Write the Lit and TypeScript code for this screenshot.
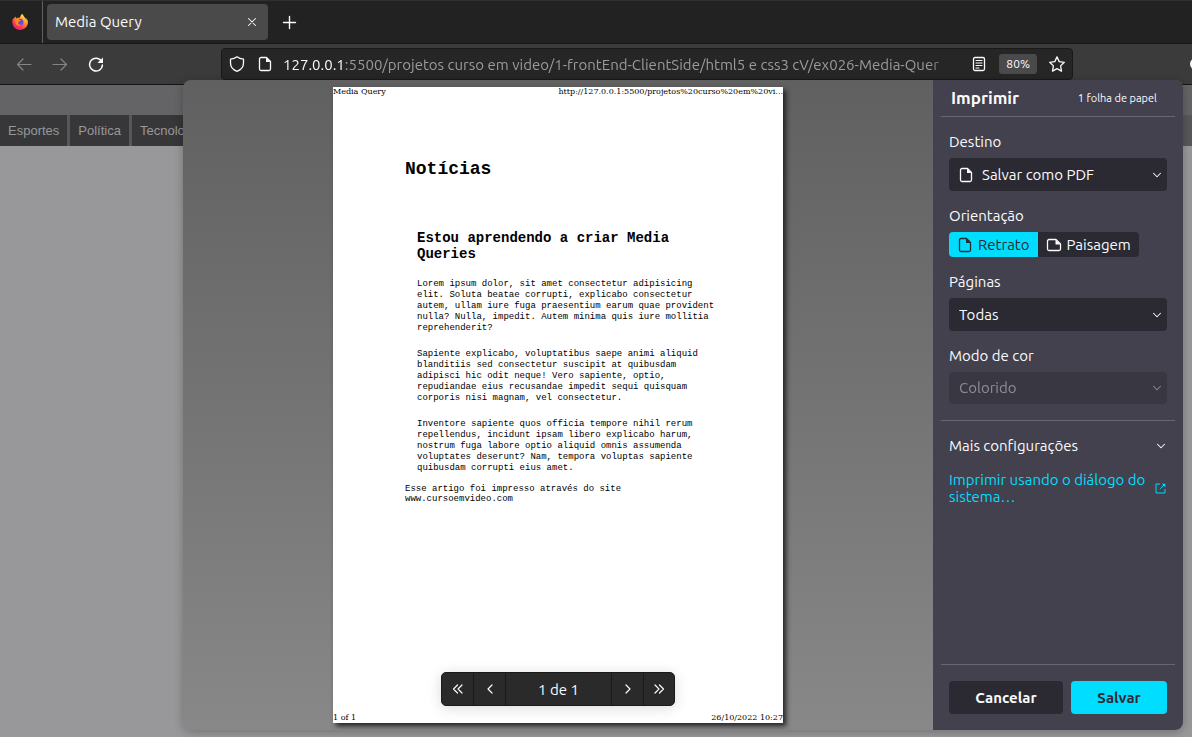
import { LitElement, html, css, svg } from "lit";
import { customElement, property, state } from "lit/decorators.js";

const sheet = svg`<path d="M9.500 1.500H4a1.500 1.500 0 0 0-1.500 1.500v10a1.500 1.500 0 0 0 1.500 1.500h8a1.500 1.500 0 0 0 1.500-1.500V5.500z" fill="none" stroke="currentColor" stroke-width="1.300" stroke-linejoin="round"/><path d="M9 1.500 13.500 6h-4a.5.5 0 0 1-.5-.5z" fill="currentColor"/>`;
const wideSheet = svg`<path d="M1.500 4v8A1.500 1.500 0 0 0 3 13.500h10a1.500 1.500 0 0 0 1.500-1.500V7L10 2.500H3A1.500 1.500 0 0 0 1.500 4z" fill="none" stroke="currentColor" stroke-width="1.300" stroke-linejoin="round"/><path d="M9.500 2.500 14.500 7.500H10a.5.5 0 0 1-.5-.5z" fill="currentColor"/>`;

const line = (d: string, w = 1.2) =>
  svg`<path d=${d} fill="none" stroke="currentColor" stroke-width=${w} stroke-linecap="round" stroke-linejoin="round"/>`;

const glyphs: Record<string, unknown> = {
  sheet,
  wideSheet,
  close: line("M4 4l8 8M12 4l-8 8"),
  plus: line("M8.500 2.500v12M2.500 8.500h12", 1.4),
  back: line("M15 8.500H1.500M7 3 1.500 8.500 7 14"),
  forward: line("M1 8.500h13.500M9 3 14.500 8.500 9 14"),
  reload: svg`${line("M13.600 5.500A6.400 6.400 0 1 0 14.400 9", 1.5)}<path d="M15 1.500V7H9.500z" fill="currentColor"/>`,
  shield: line("M8 .8C6.500 2 4 3 1.500 3.200V7c0 4 3 7 6.500 8.300C11.500 14 14.500 11 14.500 7V3.200C12 3 9.500 2 8 .8z", 1.3),
  reader: svg`<rect x="2.500" y="1.500" width="11" height="13" rx="1.500" fill="none" stroke="currentColor" stroke-width="1.300"/>${line("M5 4.500h6M5 7h6M5 9.500h6M5 12h3", 1.1)}`,
  star: line("M8 .9l2.200 4.700 5.100.7-3.700 3.600.9 5.200L8 12.600l-4.500 2.500.9-5.200L.7 6.300l5.100-.7z", 1.3),
  down: line("M4 6l4 4 4-4"),
  prev: line("M10 4L6 8l4 4"),
  next: line("M6 4l4 4-4 4"),
  first: line("M7.500 4l-4 4 4 4M12 4 8 8l4 4"),
  last: line("M4 4l4 4-4 4M8.500 4l4 4-4 4"),
  external: svg`${line("M7 2.500H2.500v11h11V9M8 8l4.500-4.500")}<path d="M9.500 2H14v4.500z" fill="currentColor"/>`,
};

@customElement("ui-icon")
class UiIcon extends LitElement {
  @property() name = "sheet";
  static styles = css`
    :host { display: inline-flex; flex: none; width: 16px; height: 16px; }
    svg { width: 100%; height: 100%; }
  `;
  render() {
    return html`<svg viewBox="0 0 16 16" aria-hidden="true">${glyphs[this.name]}</svg>`;
  }
}

@customElement("firefox-logo")
class FirefoxLogo extends LitElement {
  static styles = css`
    :host { display: inline-flex; width: 16px; height: 16px; }
  `;
  render() {
    return html`<svg viewBox="0 0 16 16" width="16" height="16" aria-hidden="true">
      <defs>
        <linearGradient id="fire" x1="0.9" y1="0" x2="0.2" y2="1">
          <stop offset="0.050" stop-color="#fff44f" />
          <stop offset="0.400" stop-color="#ff9a26" />
          <stop offset="0.700" stop-color="#ff3f4c" />
          <stop offset="1" stop-color="#e31587" />
        </linearGradient>
      </defs>
      <path fill="url(#fire)" d="M15.500 6.200c-.4-.9-1.100-1.700-1.700-2.100.5.900.7 1.700.8 2.400C13.700 4 11.900 3 10.700.3 10.400.2 10.300 0 10.300 0 8.700.9 8.100 2.500 8 3.500c-.7 0-1.400.2-2 .5-.2-.1-.3-.4-.2-.6-.7.200-1.200.6-1.600 1-.3-.4-.3-1.700-.2-2-.9.400-1.900 1.400-2.500 2.600l.1-1.300C.6 4.800.3 6.500.3 8.200A7.700 7.700 0 0 0 8 15.900c4.300 0 7.700-3.300 7.900-7.400 0-.8-.1-1.600-.4-2.300z" />
      <circle cx="8" cy="8.300" r="3.500" fill="#7542e5" />
      <path fill="#ff8a16" d="M3 6c1-1.200 2.600-1.300 3.500-.7.600.4 1 .7 2.200.8-.1.900-1.200 1-1.600 1.300-.5.400-.3 1.200-1.100 1.400 0 1.700 2 2.300 3.500 1.500C8.300 12.800 4.300 12.200 3.400 9z" />
    </svg>`;
  }
}

const base = css`
  * { box-sizing: border-box; }
  button, select, input { font: inherit; color: inherit; border: 0; margin: 0; }
  button { padding: 0; background: none; }
  h1, h2, p { margin: 0; }
`;

@customElement("browser-chrome")
class BrowserChrome extends LitElement {
  static styles = [base, css`
    :host { display: block; color: #fbfbfe; font: 15px/20px Ubuntu, "Noto Sans", sans-serif; }
    .tabs { display: flex; height: 44px; background: #222; border-top: 1px solid #303030; border-bottom: 1px solid #151515; }
    .pinned { display: grid; place-items: center; width: 43px; padding-right: 2px; border-right: 1px solid #606060; }
    .tab { display: flex; align-items: center; justify-content: space-between; width: 221px; margin: 3px 4px; padding: 0 9px 0 8px; background: #4a4a4a; border-radius: 4px; }
    .tab ui-icon { width: 14px; height: 14px; }
    button { display: grid; place-items: center; }
    .new { width: 34px; }
    .bar { display: flex; align-items: center; height: 41px; padding-left: 16px; gap: 20px; background: #3b3b3b; border-bottom: 1px solid #151515; overflow: hidden; }
    .off { color: #858585; }
    .field { display: flex; align-items: center; gap: 12px; width: 852px; height: 32px; margin-left: 97px; padding: 0 7px; flex: none; background: #262626; border: 1px solid #191919; border-radius: 4px; }
    .address { flex: 1; min-width: 0; padding-top: 2px; overflow: hidden; white-space: nowrap; color: #9b9b9b; margin-left: -2px; mask-image: linear-gradient(to left, transparent, #000 32px); }
    .host { color: #fbfbfe; }
    .zoom { height: 20px; padding: 0 7px; border-radius: 3px; background: #4a4a4a; font-size: 12px; }
    .account { width: 16px; height: 12px; margin-left: 97px; flex: none; border-radius: 8px; background: #fbfbfe; }
  `];
  render() {
    return html`
      <div class="tabs">
        <div class="pinned"><firefox-logo></firefox-logo></div>
        <div class="tab"><span>Media Query</span><button aria-label="Fechar aba"><ui-icon name="close"></ui-icon></button></div>
        <button class="new" aria-label="Nova aba"><ui-icon name="plus"></ui-icon></button>
      </div>
      <div class="bar">
        <button class="off" aria-label="Voltar"><ui-icon name="back"></ui-icon></button>
        <button class="off" aria-label="Avançar"><ui-icon name="forward"></ui-icon></button>
        <button aria-label="Recarregar"><ui-icon name="reload"></ui-icon></button>
        <div class="field">
          <ui-icon name="shield"></ui-icon>
          <ui-icon name="sheet"></ui-icon>
          <div class="address"><span class="host">127.0.0.1</span>:5500/projetos curso em video/1-frontEnd-ClientSide/html5 e css3 cV/ex026-Media-Quer</div>
          <ui-icon name="reader"></ui-icon>
          <button class="zoom">80%</button>
          <button aria-label="Favoritar"><ui-icon name="star"></ui-icon></button>
        </div>
        <button class="account" aria-label="Conta"></button>
      </div>`;
  }
}

@customElement("print-sheet")
class PrintSheet extends LitElement {
  static styles = [base, css`
    :host { display: flex; flex-direction: column; justify-content: space-between; width: 450px; background: #fff; color: #000; box-shadow: 3px 3px 5px #222; font: 9px/11px "Liberation Mono", monospace; }
    .edge { display: flex; justify-content: space-between; font: 8px/10px "DejaVu Serif", serif; }
    main { flex: 1; padding: 61px 64px 0 72px; }
    h1 { font-size: 18px; line-height: 22px; }
    article { padding: 50px 0 0 12px; }
    h2 { font-size: 14px; line-height: 16px; margin-bottom: 17px; }
    p { margin-bottom: 15px; }
    footer { margin-top: -5px; width: 230px; line-height: 10px; }
  `];
  render() {
    return html`
      <div class="edge"><span>Media Query</span><span>http://127.0.0.1:5500/projetos%20curso%20em%20vi...</span></div>
      <main>
        <h1>Notícias</h1>
        <article>
          <h2>Estou aprendendo a criar Media Queries</h2>
          <p>Lorem ipsum dolor, sit amet consectetur adipisicing elit. Soluta beatae corrupti, explicabo consectetur autem, ullam iure fuga praesentium earum quae provident nulla? Nulla, impedit. Autem minima quis iure mollitia reprehenderit?</p>
          <p>Sapiente explicabo, voluptatibus saepe animi aliquid blanditiis sed consectetur suscipit at quibusdam adipisci hic odit neque! Vero sapiente, optio, repudiandae eius recusandae impedit sequi quisquam corporis nisi magnam, vel consectetur.</p>
          <p>Inventore sapiente quos officia tempore nihil rerum repellendus, incidunt ipsam libero explicabo harum, nostrum fuga labore optio aliquid omnis assumenda voluptates deserunt? Nam, tempora voluptas sapiente quibusdam corrupti eius amet.</p>
        </article>
        <footer>Esse artigo foi impresso através do site www.cursoemvideo.com</footer>
      </main>
      <div class="edge"><span>1 of 1</span><span>26/10/2022 10:27</span></div>`;
  }
}

@customElement("print-settings")
class PrintSettings extends LitElement {
  @state() private orientation = "retrato";
  static styles = [base, css`
    :host { display: flex; flex-direction: column; width: 250px; padding: 0 8px; background: #42414d; color: #fbfbfe; font: 15px/18px Ubuntu, "Noto Sans", sans-serif; }
    header { display: flex; align-items: center; justify-content: space-between; height: 37px; padding: 0 18px 0 10px; border-bottom: 1px solid #676671; }
    h1 { font-size: 17px; line-height: 20px; }
    .count { font-size: 11px; }
    .group { display: flex; flex-direction: column; gap: 7px; padding: 16px 8px 0; }
    .pick { display: grid; align-items: center; height: 33px; }
    .pick > * { grid-area: 1 / 1; }
    .pick ui-icon { pointer-events: none; margin-left: 9px; }
    .pick .arrow { justify-self: end; width: 14px; height: 14px; margin-right: 3px; }
    select { appearance: none; width: 100%; height: 100%; padding: 0 10px; border-radius: 4px; background: #2b2a33; }
    select:disabled { color: #fbfbfe; opacity: 1; }
    .file select { padding-left: 33px; }
    .disabled { height: 32px; opacity: 0.4; }
    fieldset { border: 0; margin: 16px 8px 0; padding: 0; min-width: 0; }
    legend { padding: 0; margin-bottom: 7px; }
    .toggle { display: flex; }
    .toggle label { display: flex; align-items: center; gap: 5px; height: 25px; padding: 0 8px; background: #2b2a33; border-radius: 0 4px 4px 0; }
    .toggle label:first-child { border-radius: 4px 0 0 4px; }
    .toggle label.on { background: #00ddff; color: #2b2a33; }
    .toggle input { appearance: none; width: 0; height: 0; margin-left: -5px; }
    .more { display: flex; justify-content: space-between; align-items: center; margin-top: 16px; padding: 16px 7px 16px 8px; border-top: 1px solid #676671; text-align: left; }
    .more ui-icon { width: 14px; height: 14px; }
    a { display: flex; align-items: center; justify-content: space-between; padding: 0 8px; color: #00ddff; line-height: 17px; text-decoration: none; }
    a span { width: 200px; }
    a ui-icon { width: 13px; height: 13px; }
    footer { display: flex; gap: 8px; margin-top: auto; padding: 16px 8px; border-top: 1px solid #676671; }
    footer button { flex: 114; height: 33px; border-radius: 4px; background: #2b2a33; font-weight: 700; }
    footer .primary { flex: 96; background: #00ddff; color: #2b2a33; }
  `];
  private option(id: string, icon: string, text: string) {
    const on = this.orientation === id;
    return html`<label class=${on ? "on" : ""}><input type="radio" name="orientation" .checked=${on} @change=${() => (this.orientation = id)} /><ui-icon name=${icon}></ui-icon>${text}</label>`;
  }
  render() {
    return html`
      <header><h1>Imprimir</h1><span class="count">1 folha de papel</span></header>
      <div class="group">
        <label for="dest">Destino</label>
        <div class="pick file"><select id="dest"><option>Salvar como PDF</option></select><ui-icon name="sheet"></ui-icon><ui-icon class="arrow" name="down"></ui-icon></div>
      </div>
      <fieldset>
        <legend>Orientação</legend>
        <div class="toggle">${this.option("retrato", "sheet", "Retrato")}${this.option("paisagem", "wideSheet", "Paisagem")}</div>
      </fieldset>
      <div class="group">
        <label for="pages">Páginas</label>
        <div class="pick"><select id="pages"><option>Todas</option></select><ui-icon class="arrow" name="down"></ui-icon></div>
      </div>
      <div class="group">
        <label for="mode">Modo de cor</label>
        <div class="pick disabled"><select id="mode" disabled><option>Colorido</option></select><ui-icon class="arrow" name="down"></ui-icon></div>
      </div>
      <button class="more"><span>Mais configurações</span><ui-icon name="down"></ui-icon></button>
      <a href="#"><span>Imprimir usando o diálogo do sistema…</span><ui-icon name="external"></ui-icon></a>
      <footer><button>Cancelar</button><button class="primary">Salvar</button></footer>`;
  }
}

@customElement("app-root")
class AppRoot extends LitElement {
  static styles = [base, css`
    :host { display: flex; flex-direction: column; position: relative; height: 100vh; overflow: hidden; background: #98989a; }
    .banner { height: 30px; background: #646466; }
    .menu { display: flex; gap: 3px; background: #575759; font: 13px/31px "Liberation Sans", sans-serif; }
    .menu a { padding: 0 8px; background: #373739; color: #98989a; text-decoration: none; }
    .dialog { position: absolute; top: 80px; right: 9px; bottom: 7px; left: 183px; display: flex; border-radius: 8px; overflow: hidden; background: linear-gradient(#606060, #888); }
    .shade { position: absolute; top: 80px; right: 9px; bottom: 7px; left: 183px; border-radius: 8px; box-shadow: 0 2px 10px rgba(0, 0, 0, 0.25); }
    .preview { flex: 1; display: flex; justify-content: center; padding: 7px 0; position: relative; }
    .pager { position: absolute; bottom: 24px; left: 258px; display: flex; height: 34px; border: 1px solid #1a1a1a; border-radius: 5px; background: #2a2a2a; color: #fbfbfe; font: 15px/34px Ubuntu, "Noto Sans", sans-serif; box-shadow: 0 2px 14px rgba(0, 0, 0, 0.15); }
    .pager button { display: grid; place-items: center; width: 32px; }
    .pager button:first-child, .pager button:last-child { width: 31px; }
    .pager > * + * { border-left: 1px solid #1a1a1a; }
    .count { width: 106px; height: 32px; text-align: center; }
  `];
  render() {
    return html`
      <browser-chrome></browser-chrome>
      <div class="banner"></div>
      <nav class="menu"><a href="#">Esportes</a><a href="#">Política</a><a href="#">Tecnologia</a></nav>
      <div class="shade"></div>
      <section class="dialog" role="dialog" aria-label="Imprimir">
        <div class="preview">
          <print-sheet></print-sheet>
          <div class="pager">
            <button aria-label="Primeira"><ui-icon name="first"></ui-icon></button>
            <button aria-label="Anterior"><ui-icon name="prev"></ui-icon></button>
            <span class="count">1 de 1</span>
            <button aria-label="Próxima"><ui-icon name="next"></ui-icon></button>
            <button aria-label="Última"><ui-icon name="last"></ui-icon></button>
          </div>
        </div>
        <print-settings></print-settings>
      </section>`;
  }
}
